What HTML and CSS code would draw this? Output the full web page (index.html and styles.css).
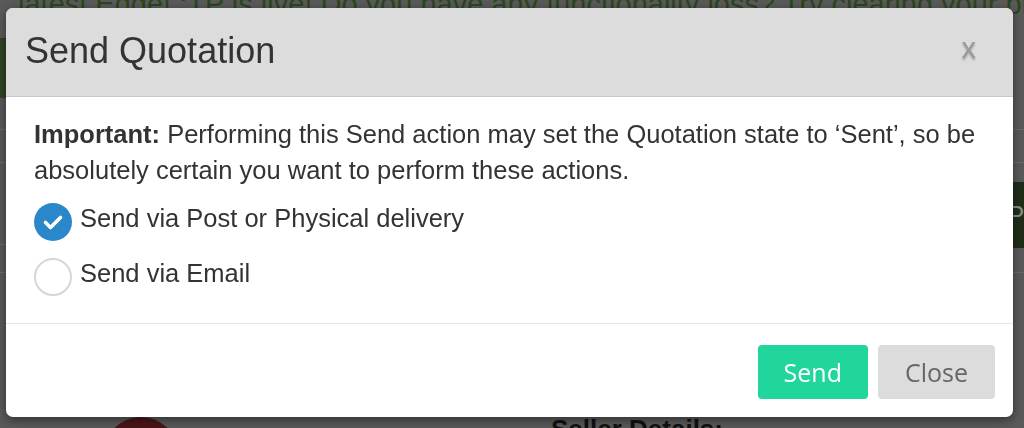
FILE: index.html
```html
<!DOCTYPE html>
<html lang="en">
    <head>
        <meta charset="UTF-8">
        <meta name="viewport" content="width=device-width, initial-scale=1.0">
        <title>Send Quotation</title>
        <link rel="stylesheet" href="styles.css">
    </head>
    <body>
        <div class="page">
            <div class="banner">latest Edge! :TP is live! Do you have any functionality loss? Try clearing your browser cache</div>
            <div class="page-content">
                <div class="left-col">
                    <div class="nav-tab"></div>
                    <div class="cell h1"></div>
                    <div class="cell h2"></div>
                    <div class="cell h3"></div>
                    <div class="cell h4"></div>
                </div>
                <div class="right-col">
                    <div class="cell r1"></div>
                    <div class="cell r2"></div>
                    <div class="dark-btn">P</div>
                    <div class="cell r3"></div>
                </div>
            </div>
            <div class="bottom-strip">
                <div class="avatar"></div>
                <div class="seller">Seller Details:</div>
            </div>
        </div>

        <div class="overlay">
            <div class="modal">
                <div class="modal-header">
                    <h4 class="modal-title">Send Quotation</h4>
                    <span class="close-x">x</span>
                </div>
                <div class="modal-body">
                    <p class="notice"><b>Important:</b> Performing this Send action may set the Quotation state to &lsquo;Sent&rsquo;, so be absolutely certain you want to perform these actions.</p>
                    <label class="option">
                        <span class="radio checked">
                            <svg width="38" height="38" viewBox="0 0 38 38"><polyline points="11.5,19.5 16.5,24.5 26.5,14.5" fill="none" stroke="#fff" stroke-width="3.6" stroke-linecap="round" stroke-linejoin="round"/></svg>
                        </span>
                        <span class="option-text">Send via Post or Physical delivery</span>
                    </label>
                    <label class="option">
                        <span class="radio"></span>
                        <span class="option-text">Send via Email</span>
                    </label>
                </div>
                <div class="modal-footer">
                    <button class="btn btn-send" type="button">Send</button>
                    <button class="btn btn-close" type="button">Close</button>
                </div>
            </div>
        </div>
    </body>
</html>
```

FILE: styles.css
```css
*{
    margin: 0;
    padding: 0;
    box-sizing: border-box;
}
body{
    width: 1024px;
    height: 428px;
    overflow: hidden;
    font-family: "Liberation Sans", Arial, Helvetica, sans-serif;
    background-color: #595959;
}
/* page behind the dialog, already darkened */
.page{
    height: 428px;
    display: flex;
    flex-direction: column;
    overflow: hidden;
}
.banner{
    height: 30px;
    margin-top: -11px;
    padding-left: 18px;
    font-size: 29px;
    line-height: 30px;
    white-space: nowrap;
    color: #2a461d;
}
.page-content{
    display: flex;
    justify-content: space-between;
}
.left-col, .right-col{
    width: 40px;
}
.cell{
    border-bottom: 1px solid #6a6a6a;
}
.nav-tab{
    margin-top: 19px;
    height: 60px;
    background-color: #2c4523;
}
.h1{ height: 32px; }
.h2{ height: 33px; }
.h3{ height: 82px; }
.h4{ height: 28px; }
.r1{ height: 111px; }
.r2{ height: 33px; }
.r3{ height: 25px; }
.dark-btn{
    margin-top: 19px;
    height: 66px;
    padding-left: 23px;
    background-color: #1f2d18;
    color: #8a8a8a;
    font-size: 26px;
    line-height: 66px;
}
.bottom-strip{
    margin-top: auto;
    height: 11px;
    display: flex;
    overflow: hidden;
}
.avatar{
    margin-left: 103px;
    width: 76px;
    height: 76px;
    border-radius: 50%;
    background-color: #4a1518;
    flex-shrink: 0;
}
.seller{
    margin-left: 372px;
    margin-top: -3px;
    font-size: 26px;
    font-weight: bold;
    color: #111;
    line-height: 30px;
    white-space: nowrap;
}

/* dialog */
.overlay{
    position: fixed;
    top: 0;
    left: 0;
    right: 0;
    bottom: 0;
    padding: 8px 0 0 6px;
}
.modal{
    width: 1007px;
    background-color: #fff;
    border-radius: 7px;
    overflow: hidden;
    box-shadow: 0 3px 10px rgba(0,0,0,.45);
}
.modal-header{
    height: 89px;
    display: flex;
    align-items: center;
    justify-content: space-between;
    padding: 0 37px 2px 19px;
    background-color: #dcdcdc;
    border-bottom: 1px solid #c9c9c9;
}
.modal-title{
    font-size: 36px;
    font-weight: normal;
    color: #333;
}
.close-x{
    font-size: 29px;
    color: #999;
    text-shadow: 0 2px 2px rgba(0,0,0,.25);
    margin-bottom: 6px;
}
.modal-body{
    padding: 19px 28px 27px 28px;
    color: #333;
    font-size: 25.5px;
}
.notice{
    line-height: 36px;
    margin-bottom: 15px;
}
.option{
    display: flex;
    align-items: center;
    gap: 8px;
    height: 38px;
    margin-bottom: 17px;
}
.option:last-child{
    margin-bottom: 0;
}
.option-text{
    padding-bottom: 7px;
}
.radio{
    width: 38px;
    height: 38px;
    border-radius: 50%;
    border: 2px solid #d6d6d6;
    flex-shrink: 0;
}
.radio.checked{
    border: none;
    background-color: #2a87c9;
}
.radio svg{
    display: block;
}
.modal-footer{
    display: flex;
    justify-content: flex-end;
    gap: 10px;
    padding: 21px 18px 18px 0;
    border-top: 1px solid #e5e5e5;
}
.btn{
    height: 54px;
    padding: 0 26px;
    border: none;
    outline: none;
    border-radius: 4px;
    font-family: "Open Sans", sans-serif;
    font-size: 25px;
    cursor: pointer;
}
.btn-send{
    background-color: #21d69c;
    color: #fff;
}
.btn-close{
    background-color: #dcdcdc;
    color: #666;
    padding: 0 27px;
}
```
